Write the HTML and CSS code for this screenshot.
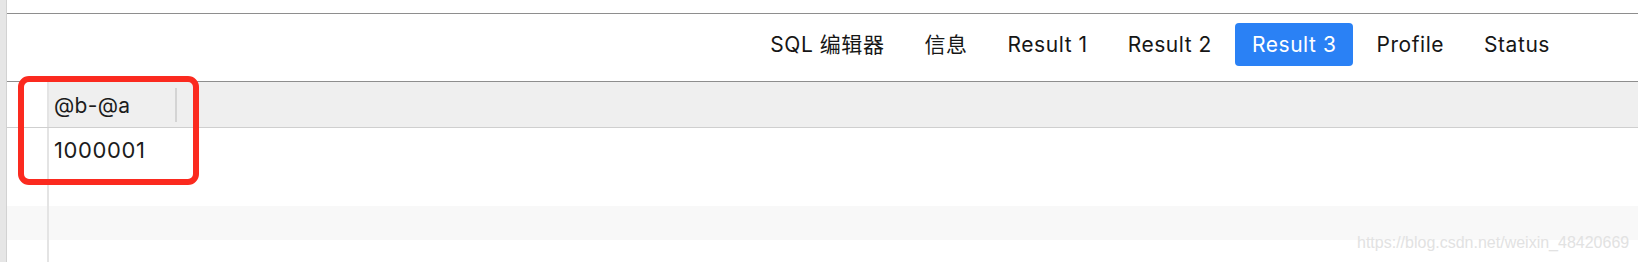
FILE: index.html
```html
<!DOCTYPE html>
<html lang="zh">
<head>
<meta charset="utf-8">
<link rel="stylesheet" href="styles.css">
</head>
<body>
<div class="app">
  <div class="gutter"></div>
  <div class="main">
    <div class="topbar"></div>
    <div class="toolbar">
      <nav class="tabs">
        <span class="tab">SQL 编辑器</span>
        <span class="tab">信息</span>
        <span class="tab">Result 1</span>
        <span class="tab">Result 2</span>
        <span class="tab active">Result 3</span>
        <span class="tab">Profile</span>
        <span class="tab">Status</span>
      </nav>
    </div>
    <div class="grid">
      <div class="row head">
        <div class="idx"></div>
        <div class="col"><span class="label">@b-@a</span><i class="sep"></i></div>
      </div>
      <div class="row first">
        <div class="idx"></div>
        <div class="col">1000001</div>
      </div>
      <div class="row">
        <div class="idx"></div>
        <div class="col"></div>
      </div>
      <div class="row stripe">
        <div class="idx"></div>
        <div class="col"></div>
      </div>
      <div class="row fill">
        <div class="idx"></div>
        <div class="col"></div>
      </div>
      <div class="mark"></div>
    </div>
  </div>
</div>
<div class="watermark">https://blog.csdn.net/weixin_48420669</div>
</body>
</html>
```
FILE: styles.css
```css
html, body {
  margin: 0;
  padding: 0;
  background: #ffffff;
  width: 1638px;
  height: 262px;
  overflow: hidden;
  font-family: "Inter", "Liberation Sans", "Noto Sans CJK SC", sans-serif;
  color: #1c1c1c;
}
.app {
  display: flex;
  height: 262px;
}
.gutter {
  width: 6px;
  background: #e6e6e6;
  border-right: 1px solid #d2d2d2;
  flex: none;
}
.main {
  flex: 1;
  display: flex;
  flex-direction: column;
  position: relative;
}
.topbar {
  height: 13px;
  border-bottom: 1px solid #8e8e8e;
}
.toolbar {
  height: 67px;
  border-bottom: 1px solid #8e8e8e;
  display: flex;
  justify-content: flex-end;
  align-items: flex-start;
  padding-right: 71px;
}
.tabs {
  display: flex;
  gap: 6px;
  margin-top: 9px;
}
.tab {
  height: 43px;
  line-height: 44px;
  padding: 0 17px;
  font-size: 21px;
  letter-spacing: 0.55px;
  border-radius: 4px;
  color: #161616;
  white-space: nowrap;
}
.tab.active {
  background: #2a81f5;
  color: #ffffff;
}
.grid {
  flex: 1;
  display: flex;
  flex-direction: column;
  position: relative;
}
.row {
  display: flex;
  height: 34px;
}
.idx {
  width: 40px;
  flex: none;
  border-right: 2px solid #e4e4e4;
}
.col {
  width: 123px;
  flex: none;
  display: flex;
  align-items: center;
  padding-left: 5px;
  font-size: 22px;
  letter-spacing: 0.6px;
}
.row.head {
  height: 45px;
  background: #efefef;
  border-bottom: 1px solid #cfcfcf;
}
.row.head .idx {
  background: #ffffff;
}
.row.head .col {
  font-size: 21px;
  letter-spacing: 0.3px;
  padding-top: 1px;
  box-sizing: border-box;
  width: 128px;
}
.label {
  flex: 1;
}
.sep {
  display: block;
  width: 2px;
  height: 34px;
  background: #d4d4d4;
}
.row.first {
  height: 44px;
}
.row.stripe {
  background: #f8f8f8;
}
.row.fill {
  flex: 1;
}
.mark {
  position: absolute;
  left: 11px;
  top: -6px;
  width: 169px;
  height: 97px;
  border: 6px solid #fb2a1f;
  border-radius: 11px;
}
.watermark {
  position: absolute;
  left: 1357px;
  top: 234px;
  font-family: "Liberation Sans", sans-serif;
  font-size: 16px;
  color: #e2e2e2;
  white-space: nowrap;
}
```
